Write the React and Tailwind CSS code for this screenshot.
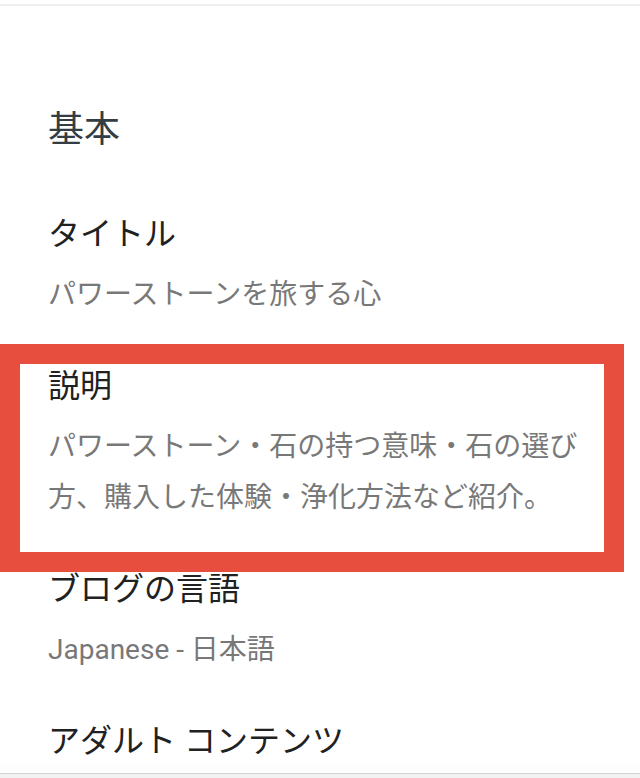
import React from 'react';

const FONT = "font-['Roboto','Noto_Sans_CJK_JP',sans-serif]";

const ITEMS = [
  { title: 'タイトル', value: 'パワーストーンを旅する心' },
  { title: '説明', value: 'パワーストーン・石の持つ意味・石の選び方、購入した体験・浄化方法など紹介。' },
  { title: 'ブログの言語', value: 'Japanese - 日本語' },
  { title: 'アダルト コンテンツ', value: null },
];

const Item = ({ title, value }) => (
  <div>
    <div className="text-[32px] leading-[48px] text-[#212121]">{title}</div>
    {value && (
      <div className="mt-[11px] text-[28px] leading-[51px] text-[#787878] pr-[40px]">{value}</div>
    )}
  </div>
);

export default function App() {
  return (
    <div className={`relative h-[778px] w-[640px] bg-white overflow-hidden flex flex-col ${FONT}`}>
      {/* top divider */}
      <div className="mt-1 h-[2px] bg-[#eeeeee]" />

      <div className="flex-1 pl-12 pt-[100px] flex flex-col gap-[42px]">
        <h2 className="mb-[14px] text-[36px] leading-[48px] text-[#343c44]">基本</h2>
        {ITEMS.map(it => <Item key={it.title} {...it} />)}
      </div>

      {/* bottom bar */}
      <div className="h-[5px] border-t border-[#d4d4d4] bg-[#f2f2f2] shadow-[0_-6px_12px_rgba(0,0,0,0.03)]" />

      {/* highlight annotation */}
      <div className="pointer-events-none absolute left-0 top-[344px] h-[228px] w-[624px] border-[20px] border-[#e84e3e]" />
    </div>
  );
}
